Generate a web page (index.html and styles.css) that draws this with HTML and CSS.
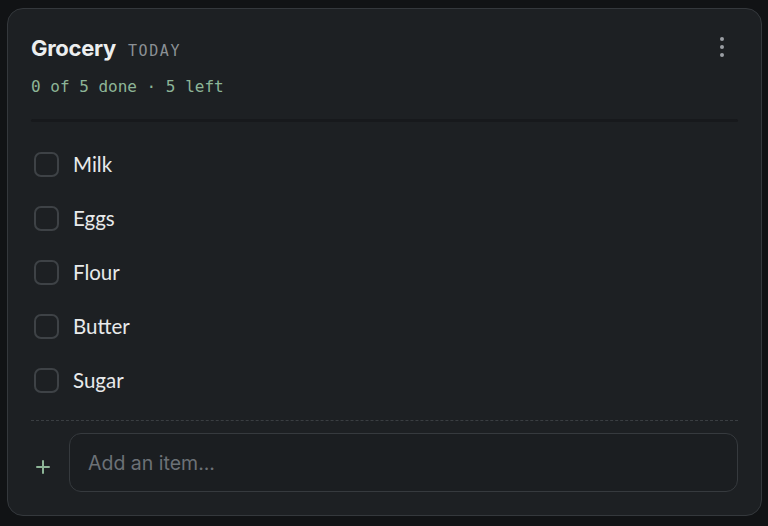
FILE: index.html
```html
<!DOCTYPE html>
<html>
<head>
<meta charset="utf-8">
<link rel="stylesheet" href="styles.css">
</head>
<body>
<div class="card">
  <div class="header">
    <div class="titles">
      <div class="title-row">
        <span class="title">Grocery</span>
        <span class="tag">TODAY</span>
      </div>
      <div class="sub">0 of 5 done · 5 left</div>
    </div>
    <button class="more" aria-label="More">
      <svg width="6" height="22" viewBox="0 0 6 22"><circle cx="3" cy="3" r="2" fill="#9a9ea3"/><circle cx="3" cy="11" r="2" fill="#9a9ea3"/><circle cx="3" cy="19" r="2" fill="#9a9ea3"/></svg>
    </button>
  </div>
  <div class="divider"></div>
  <ul class="list">
    <li class="item"><span class="box"></span><span class="label">Milk</span></li>
    <li class="item"><span class="box"></span><span class="label">Eggs</span></li>
    <li class="item"><span class="box"></span><span class="label">Flour</span></li>
    <li class="item"><span class="box"></span><span class="label">Butter</span></li>
    <li class="item"><span class="box"></span><span class="label">Sugar</span></li>
  </ul>
  <div class="add-row">
    <span class="plus"><svg width="14" height="14" viewBox="0 0 14 14"><path d="M7 1v12M1 7h12" stroke="#8db597" stroke-width="2" stroke-linecap="round"/></svg></span>
    <div class="input">Add an item...</div>
  </div>
</div>
</body>
</html>
```
FILE: styles.css
```css
* { box-sizing: border-box; }
html, body { margin: 0; padding: 0; background: #111315; }
body { padding: 8px 6px 10px 7px; height: 526px; }
.card {
  height: 508px;
  background: #1d2023;
  border: 1px solid #34383c;
  border-radius: 16px;
  padding: 24px 23px 0 23px;
  display: flex;
  flex-direction: column;
}
.header { display: flex; justify-content: space-between; align-items: flex-start; }
.title-row { display: flex; align-items: baseline; gap: 12px; height: 32px; padding-top: 2px; }
.title { font-family: Inter, "Noto Sans", sans-serif; font-weight: 700; font-size: 22px; color: #eceeef; letter-spacing: -0.3px; }
.tag { font-family: "DejaVu Sans Mono", monospace; font-size: 15px; color: #8b9095; letter-spacing: 1.6px; }
.sub { margin-top: 12px; font-family: "DejaVu Sans Mono", monospace; font-size: 16px; color: #8db597; }
.more { background: none; border: 0; padding: 0; margin: 3px 13px 0 0; width: 6px; height: 22px; display: block; }
.more svg { display: block; }
.divider { margin-top: 23px; height: 3px; background: #17191c; border-radius: 2px; flex: none; }
.list { list-style: none; margin: 15px 0 0 0; padding: 0; }
.item { height: 54px; display: flex; align-items: center; padding-left: 3px; }
.box { width: 25px; height: 25px; border: 2px solid #3e4246; border-radius: 7px; flex: none; }
.label { margin-left: 14px; font-family: Lato, "Noto Sans", sans-serif; font-size: 20.5px; color: #e8eaeb; }
.add-row {
  margin-top: 13px;
  border-top: 1px dashed #3a3e42;
  padding-top: 12px;
  display: flex;
  align-items: center;
  flex: none;
}
.plus { width: 38px; padding-left: 5px; display: flex; align-items: center; padding-top: 8px; }
.plus svg { display: block; }
.input {
  flex: 1;
  height: 59px;
  border: 1px solid #363a3e;
  border-radius: 12px;
  background: #1b1e21;
  display: flex;
  align-items: center;
  padding-left: 18px;
  font-family: Inter, "Noto Sans", sans-serif;
  font-size: 19.5px;
  color: #6c7176;
}
```
